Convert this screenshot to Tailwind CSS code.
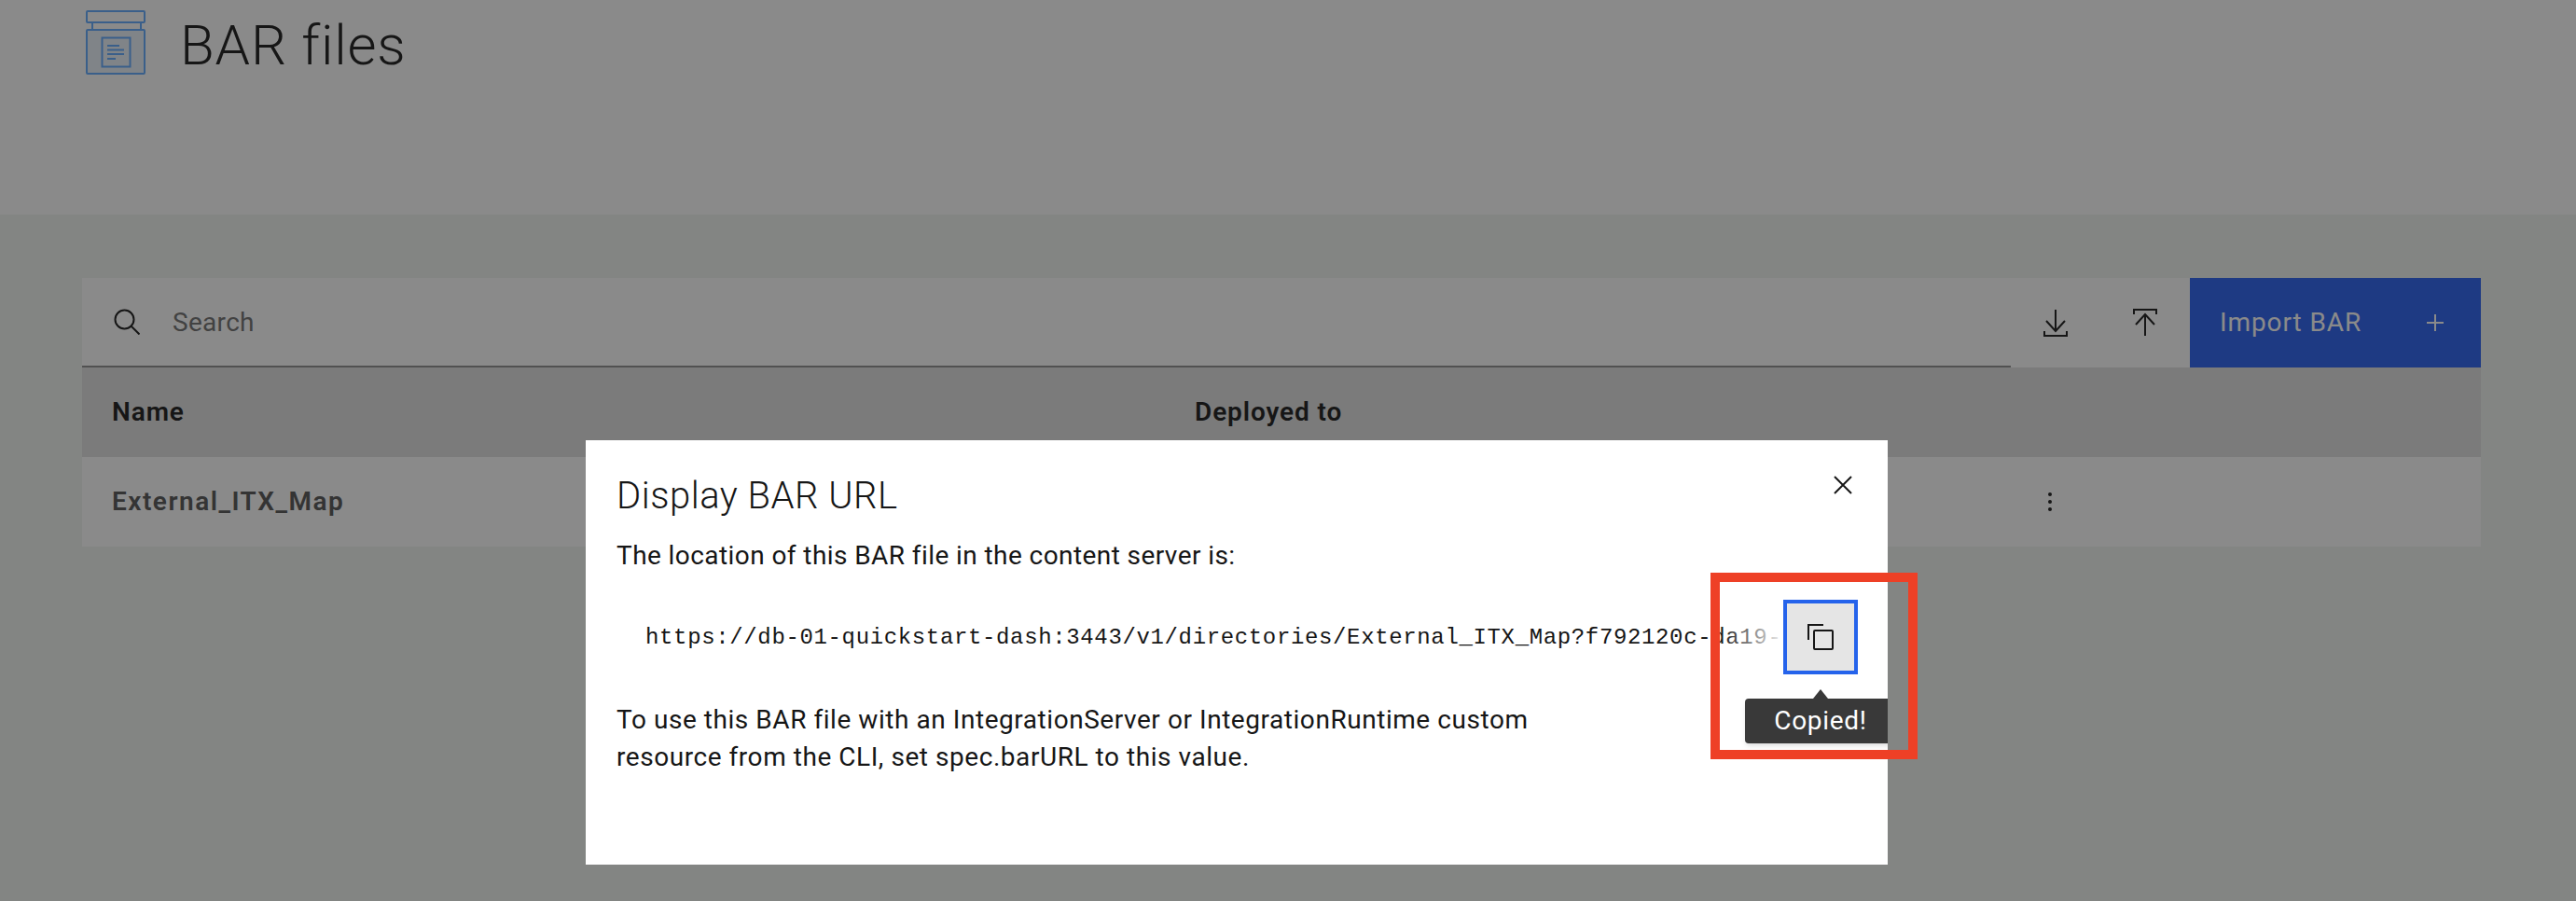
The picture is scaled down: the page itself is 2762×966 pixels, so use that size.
<!DOCTYPE html>
<html lang="en">
<head>
    <meta charset="UTF-8">
    <title>BAR files</title>
    <script src="https://cdn.jsdelivr.net/npm/@tailwindcss/browser@4"></script>
</head>
<body class="relative h-[966px] w-[2762px] overflow-hidden bg-[#f0f4f0] font-['Roboto',sans-serif] text-[#161616]">

    <!-- Page header -->
    <header class="flex h-[230px] items-start gap-[37px] bg-white pl-[92px] pt-[11px]">
        <svg width="64" height="69" viewBox="0 0 64 69" fill="none" stroke="#5fa8ff" stroke-width="2">
            <rect x="1" y="1" width="62" height="12" rx="1" fill="#fff"/>
            <path d="M7 13v8M59 13v8" stroke-width="2"/>
            <rect x="1" y="21" width="62" height="47" rx="1" fill="#eaf3fb"/>
            <rect x="17.500" y="29.500" width="30" height="31" fill="#eaf3fb"/>
            <path d="M23 38h13M23 42.500h18M23 47h18M23 52h9"/>
        </svg>
        <h1 class="mt-[2px] text-[60px] font-light leading-[72px] tracking-[0.8px]">BAR files</h1>
    </header>

    <!-- BAR table -->
    <main class="ml-[88px] w-[2572px] pt-[68px]">
        <div class="flex h-[96px] bg-white">
            <div class="flex w-[2068px] items-center gap-[35px] border-b-2 border-[#8d8d8d] pl-[34px]">
                <svg width="28" height="28" viewBox="0 0 28 28" fill="none" stroke="#161616" stroke-width="2">
                    <circle cx="11.500" cy="11.500" r="10"/>
                    <path d="M18.500 18.500l9 9"/>
                </svg>
                <span class="mt-[2px] text-[28px] tracking-[0.3px] text-[#6f6f6f]">Search</span>
            </div>
            <button class="flex w-[96px] items-center justify-center">
                <svg width="26" height="30" viewBox="0 0 26 30" fill="none" stroke="#161616" stroke-width="2">
                    <path d="M13 1v23M3 13l10 11 10-11M1 24v5h24v-5"/>
                </svg>
            </button>
            <button class="flex w-[96px] items-center justify-center">
                <svg width="26" height="30" viewBox="0 0 26 30" fill="none" stroke="#161616" stroke-width="2">
                    <path d="M13 29V6M3 17L13 6l10 11M1 6V1h24v5"/>
                </svg>
            </button>
            <button class="flex w-[312px] items-center justify-between bg-[#265ef0] pl-[32px] pr-[40px] text-[28px] tracking-[0.9px] text-white">
                <span>Import BAR</span>
                <svg width="18" height="18" viewBox="0 0 18 18" stroke="#fff" stroke-width="2"><path d="M9 0v18M0 9h18"/></svg>
            </button>
        </div>
        <div class="flex h-[96px] items-center bg-[#e0e0e0] text-[28px] font-semibold tracking-[0.9px]">
            <div class="w-[1193px] pl-[32px]">Name</div>
            <div>Deployed to</div>
        </div>
        <div class="flex h-[96px] items-center bg-white text-[28px] font-semibold tracking-[1.5px] text-[#525252]">
            <div class="w-[2098px] pl-[32px]">External_ITX_Map</div>
            <svg width="24" height="24" viewBox="0 0 24 24" fill="#161616">
                <circle cx="12" cy="4" r="2"/><circle cx="12" cy="12" r="2"/><circle cx="12" cy="20" r="2"/>
            </svg>
        </div>
    </main>

    <!-- Overlay -->
    <div class="absolute inset-0 bg-[#161616]/50"></div>

    <!-- Modal -->
    <div class="absolute left-[628px] top-[472px] h-[455px] w-[1396px] overflow-hidden bg-white pl-[33px] pt-[37px]">
        <button class="absolute left-[1338px] top-[38px]">
            <svg class="block" width="20" height="20" viewBox="0 0 20 20" stroke="#161616" stroke-width="2"><path d="M1 1l18 18M19 1L1 19"/></svg>
        </button>
        <h2 class="mt-[-1px] mb-[1px] text-[40px] font-light leading-[48px] tracking-[0.5px]">Display BAR URL</h2>
        <p class="mt-[20px] text-[28px] leading-[40px] tracking-[0.42px]">The location of this BAR file in the content server is:</p>

        <div class="relative mt-[27px] flex h-[80px] items-center">
            <div class="relative w-[1251px] overflow-hidden whitespace-nowrap pl-[31px] pt-[2px] font-['Liberation_Mono',monospace] text-[24px] tracking-[0.64px]">
                https://db-01-quickstart-dash:3443/v1/directories/External_ITX_Map?f792120c-da19-
                <div class="absolute inset-y-0 right-[4px] w-[64px] bg-gradient-to-r from-white/0 to-white/90"></div>
            </div>
            <button class="flex h-[80px] w-[80px] items-center justify-center border-4 border-[#2563eb] bg-[#e5e5e5]">
                <svg width="28" height="28" viewBox="0 0 28 28" fill="none" stroke="#161616" stroke-width="2">
                    <rect x="7" y="7" width="20" height="20" rx="1"/>
                    <path d="M1 17V1h16"/>
                </svg>
            </button>
            <div class="absolute left-[1210px] top-[106px] flex h-[48px] w-[162px] items-center justify-center rounded-[4px] bg-[#393939] text-[28px] tracking-[0.7px] text-white shadow-md">
                <span class="absolute left-[73px] top-[-10px] h-0 w-0 border-x-[8px] border-b-[10px] border-x-transparent border-b-[#393939]"></span>
                Copied!
            </div>
        </div>

        <p class="mt-[29px] text-[28px] leading-[40px] tracking-[0.55px]">To use this BAR file with an IntegrationServer or IntegrationRuntime custom<br>resource from the CLI, set spec.barURL to this value.</p>
    </div>

    <!-- Annotation box -->
    <div class="absolute left-[1834px] top-[614px] h-[200px] w-[222px] border-[10px] border-[#ee4026]"></div>

</body>
</html>
